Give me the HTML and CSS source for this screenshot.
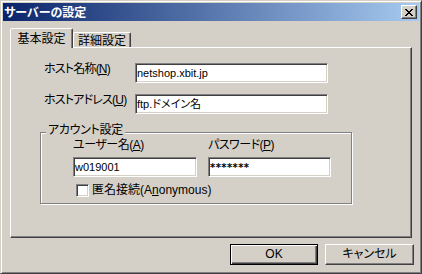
FILE: index.html
```html
<!DOCTYPE html>
<html lang="ja">
<head>
<meta charset="utf-8">
<title>サーバーの設定</title>
<link rel="stylesheet" href="styles.css">
</head>
<body>
<div class="window">
  <div class="titlebar">
    <span class="title">サーバーの設定</span>
    <span class="close"><svg width="8" height="7" viewBox="0 0 8 7"><path d="M0 0h2v1h1v1h2v-1h1v-1h2v1h-1v1h-1v1h-1v1h1v1h1v1h1v1h-2v-1h-1v-1h-2v1h-1v1h-2v-1h1v-1h1v-1h1v-1h-1v-1h-1v-1h-1z" fill="#000"/></svg></span>
  </div>
  <div class="content">
    <div class="tabs">
      <div class="tab active">基本設定</div>
      <div class="tab second">詳細設定</div>
    </div>
    <div class="panel">
      <div class="hostgrid">
        <span class="label">ホスト名称(<u>N</u>)</span>
        <div class="input">netshop.xbit.jp</div>
        <span class="label">ホストアドレス(<u>U</u>)</span>
        <div class="input">ftp.ドメイン名</div>
      </div>
      <div class="group">
        <span class="legend">アカウント設定</span>
        <div class="cols">
          <div class="col user">
            <span class="label">ユーザー名(<u>A</u>)</span>
            <div class="input">w019001</div>
          </div>
          <div class="col pass">
            <span class="label">パスワード(<u>P</u>)</span>
            <div class="input password">*******</div>
          </div>
        </div>
        <div class="check">
          <span class="box"></span>
          <span class="checklabel">匿名接続(A<u>n</u>onymous)</span>
        </div>
      </div>
    </div>
    <div class="buttons">
      <div class="btn default">OK</div>
      <div class="btn cancel">キャンセル</div>
    </div>
  </div>
</div>
</body>
</html>
```
FILE: styles.css
```css
* { box-sizing: border-box; }
html, body { margin: 0; padding: 0; }
body {
  width: 422px;
  height: 274px;
  background: #D4D0C8;
  font-family: "Liberation Sans", "Noto Sans CJK JP", sans-serif;
  font-size: 12px;
  line-height: 14px;
  color: #000;
  font-feature-settings: "palt";
}
.window {
  width: 422px;
  height: 274px;
  background: #D4D0C8;
  border: 1px solid;
  border-color: #D4D0C8 #404040 #404040 #D4D0C8;
  box-shadow: inset 1px 1px #fff, inset -1px -1px #808080;
  padding: 2px;
  display: flex;
  flex-direction: column;
}
.titlebar {
  height: 18px;
  display: flex;
  align-items: center;
  justify-content: space-between;
  background: linear-gradient(to right, #0A246A, #A6CAF0);
  padding: 0 2px 0 1px;
}
.title {
  color: #fff;
  font-weight: bold;
  font-family: "Noto Sans CJK JP", sans-serif;
  font-size: 12px;
}
.close {
  width: 16px;
  height: 14px;
  background: #D4D0C8;
  border: 1px solid;
  border-color: #fff #404040 #404040 #fff;
  box-shadow: inset -1px -1px #808080;
  display: flex;
  align-items: center;
  justify-content: center;
}
.close svg { display: block; }
.content {
  flex: 1;
  padding: 7px 5px 0 7px;
  display: flex;
  flex-direction: column;
}
.tabs {
  display: flex;
  align-items: flex-start;
  height: 20px;
}
.tab {
  height: 15px;
  margin-top: 4px;
  border: 1px solid;
  border-bottom: none;
  border-color: #fff #404040 transparent #fff;
  box-shadow: inset -1px 0 #808080;
  border-radius: 2px 2px 0 0;
  text-align: center;
  font-family: "Noto Sans CJK JP", sans-serif;
  line-height: 13px;
}
.tab.active {
  width: 63px;
  height: 20px;
  margin-top: 0;
  padding-top: 2px;
  line-height: 14px;
  position: relative;
  z-index: 1;
  background: #D4D0C8;
}
.tab.second { width: 58px; }
.label { letter-spacing: -0.5px; }
.hostgrid .label { letter-spacing: -0.8px; margin-top: -1px; }
.panel {
  width: 402px;
  height: 191px;
  margin-top: -1px;
  border: 1px solid;
  border-color: #fff #404040 #404040 #fff;
  box-shadow: inset -1px -1px #808080;
  padding: 15px 0 0 29px;
}
.hostgrid {
  display: grid;
  grid-template-columns: 91px 193px;
  grid-auto-rows: 20px;
  row-gap: 11px;
  padding-left: 4px;
}
.input {
  height: 20px;
  background: #fff;
  border: 1px solid;
  border-color: #808080 #fff #fff #808080;
  box-shadow: inset 1px 1px #404040, inset -1px -1px #D4D0C8;
  padding: 0 1px;
  font-size: 11px;
  line-height: 19px;
  white-space: nowrap;
  overflow: hidden;
}
.input.password {
  font-family: "DejaVu Sans", sans-serif;
  font-weight: bold;
  font-size: 10px;
  letter-spacing: 0.4px;
}
.group {
  position: relative;
  width: 312px;
  height: 72px;
  margin-top: 18px;
  border: 1px solid #808080;
  box-shadow: inset 1px 1px #fff, 1px 1px #fff;
  padding: 5px 0 0 32px;
}
.legend {
  position: absolute;
  top: -10px;
  left: 5px;
  padding: 0 2px;
  background: #D4D0C8;
  letter-spacing: -0.3px;
}
.cols {
  display: flex;
  gap: 11px;
}
.col {
  display: flex;
  flex-direction: column;
  gap: 5px;
}
.col.user { width: 124px; }
.col.pass { width: 123px; }
.check {
  display: flex;
  align-items: center;
  gap: 3px;
  margin-top: 6px;
  margin-left: 3px;
  height: 14px;
}
.box {
  width: 13px;
  height: 13px;
  background: #fff;
  border: 1px solid;
  border-color: #808080 #fff #fff #808080;
  box-shadow: inset 1px 1px #404040, inset -1px -1px #D4D0C8;
}
.buttons {
  display: flex;
  justify-content: flex-end;
  gap: 7px;
  margin-top: 6px;
}
.btn {
  height: 21px;
  width: 88px;
  border: 1px solid;
  border-color: #fff #404040 #404040 #fff;
  box-shadow: inset -1px -1px #808080;
  text-align: center;
  line-height: 18px;
}
.btn.cancel { width: 89px; }
.btn.default {
  border: 1px solid #000;
  box-shadow: inset 1px 1px #fff, inset -1px -1px #404040, inset -2px -2px #808080;
}
```
